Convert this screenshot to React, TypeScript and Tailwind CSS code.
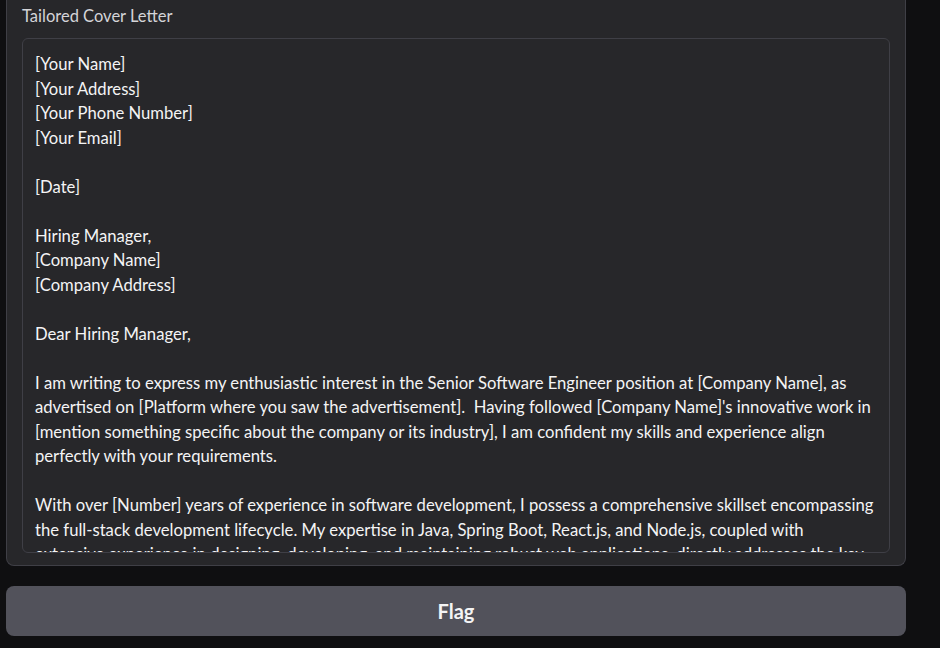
import React from "react";

const lines = [
  "[Your Name]",
  "[Your Address]",
  "[Your Phone Number]",
  "[Your Email]",
  "",
  "[Date]",
  "",
  "Hiring Manager,",
  "[Company Name]",
  "[Company Address]",
  "",
  "Dear Hiring Manager,",
  "",
  "I am writing to express my enthusiastic interest in the Senior Software Engineer position at [Company Name], as",
  "advertised on [Platform where you saw the advertisement].  Having followed [Company Name]'s innovative work in",
  "[mention something specific about the company or its industry], I am confident my skills and experience align",
  "perfectly with your requirements.",
  "",
  "With over [Number] years of experience in software development, I possess a comprehensive skillset encompassing",
  "the full-stack development lifecycle. My expertise in Java, Spring Boot, React.js, and Node.js, coupled with",
  "extensive experience in designing, developing, and maintaining robust web applications, directly addresses the key",
];

const App = () => {
  return (
    <div
      className="min-h-screen w-full bg-[#0f0f11] pr-[34px] pl-[6px]"
      style={{ fontFamily: "Lato, 'Open Sans', sans-serif" }}
    >
      <div className="rounded-b-lg border-x border-b border-[#3f3f46] bg-[#27272a] px-[15px] pb-[12px] pt-[5px]">
        <div className="mb-[11px] text-[16.5px] leading-[22px] text-[#d4d4d8]">
          Tailored Cover Letter
        </div>
        <div className="h-[515px] overflow-hidden rounded-md border border-[#3f3f46] bg-[#27272a] px-[12px] pt-[13px]">
          {lines.map((line, i) => (
            <div
              key={i}
              className="h-[24.5px] whitespace-pre text-[16.65px] leading-[24.5px] text-[#f4f4f5]"
            >
              {line || " "}
            </div>
          ))}
        </div>
      </div>
      <button className="mt-[20px] flex h-[50px] w-full items-center justify-center rounded-lg bg-[#52525b] text-[20px] font-bold text-[#f4f4f5]">
        Flag
      </button>
    </div>
  );
};

export default App;
